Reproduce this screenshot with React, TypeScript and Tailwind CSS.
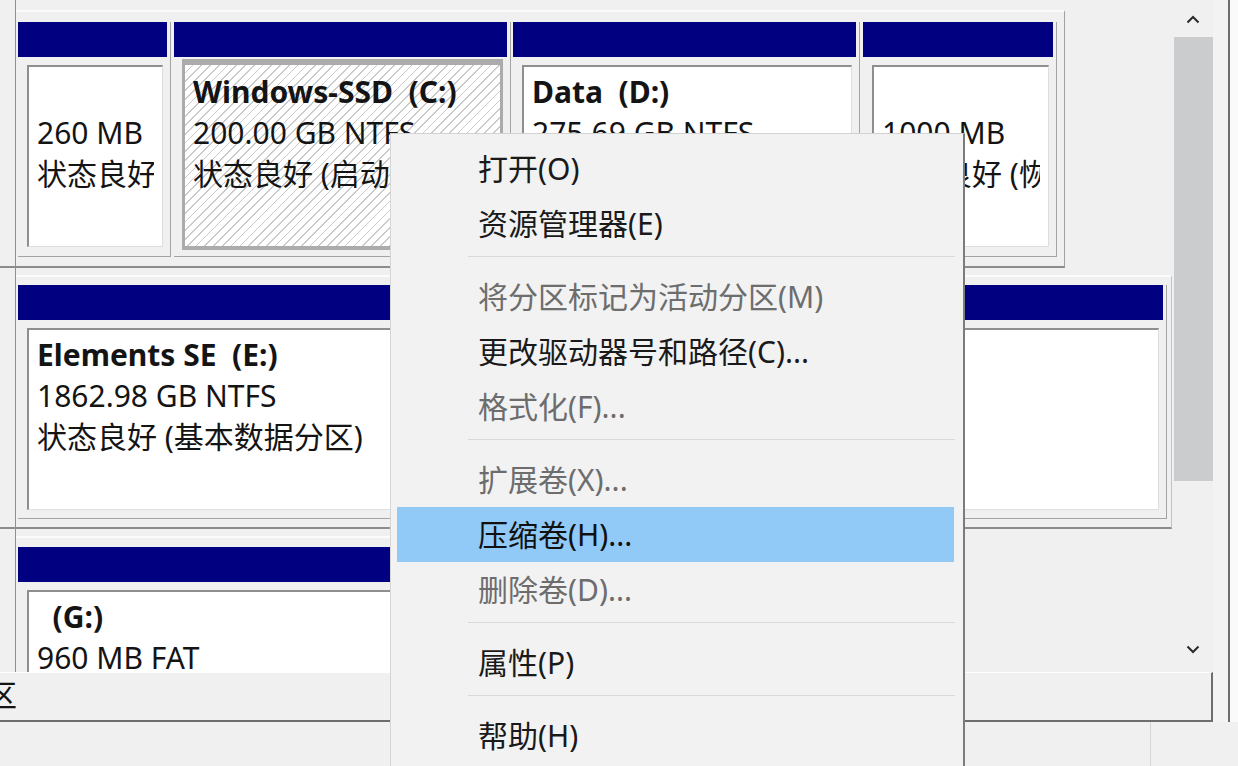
import React from "react";

type Item = { t: string; d?: boolean; h?: boolean } | "sep";

const menuItems: Item[] = [
  { t: "打开(O)" },
  { t: "资源管理器(E)" },
  "sep",
  { t: "将分区标记为活动分区(M)", d: true },
  { t: "更改驱动器号和路径(C)..." },
  { t: "格式化(F)...", d: true },
  "sep",
  { t: "扩展卷(X)...", d: true },
  { t: "压缩卷(H)...", h: true },
  { t: "删除卷(D)...", d: true },
  "sep",
  { t: "属性(P)" },
  "sep",
  { t: "帮助(H)" },
];

function Lines({ lines }: { lines: { text: string; bold?: boolean }[] }) {
  return (
    <div className="overflow-hidden whitespace-pre text-[30px] leading-[41px] text-[#141414]">
      {lines.map((l, i) => (
        <div key={i} className={l.bold ? "font-bold" : "font-normal"}>
          {l.text === "" ? "\u00a0" : l.text}
        </div>
      ))}
    </div>
  );
}

function Header() {
  return <div className="h-[35px] shrink-0 bg-[#000080]" />;
}

function WhiteBox({ lines, tall }: { lines: { text: string; bold?: boolean }[]; tall?: boolean }) {
  return (
    <div
      className={
        (tall ? "h-[300px] " : "h-[182px] ") +
        "ml-[9px] mr-[4px] mt-[8px] bg-white border-t-2 border-l-2 border-r border-b border-t-[#8e8e8e] border-l-[#8e8e8e] border-r-[#dedede] border-b-[#dedede] pl-[8px] pr-[8px] pt-[4px]"
      }
    >
      <Lines lines={lines} />
    </div>
  );
}

function ChevronUp() {
  return (
    <svg width="14" height="9" viewBox="0 0 14 9">
      <polyline points="1.5,7.5 7,2 12.5,7.5" fill="none" stroke="#2b2b2b" strokeWidth="2" />
    </svg>
  );
}

function ChevronDown() {
  return (
    <svg width="14" height="9" viewBox="0 0 14 9">
      <polyline points="1.5,1.5 7,7 12.5,1.5" fill="none" stroke="#2b2b2b" strokeWidth="2" />
    </svg>
  );
}

function DiskView() {
  return (
    <div className="w-[1172px] h-[672px] shrink-0 flex overflow-hidden bg-[#f0f0f0]">
      {/* left label column edge */}
      <div className="w-[16px] shrink-0 flex flex-col border-r border-r-[#8f8f8f]">
        <div className="h-[266px] shrink-0" />
        <div className="h-[2px] shrink-0 bg-[#8c8c8c]" />
        <div className="h-[259px] shrink-0" />
        <div className="h-[2px] shrink-0 bg-[#8c8c8c]" />
      </div>

      <div className="flex flex-col items-start pt-[10px]">
        {/* Disk 0 */}
        <div className="flex border-t-2 border-r border-b-2 border-t-[#fbfbfb] border-r-[#a0a0a0] border-b-[#8c8c8c] pl-[2px] pr-[7px] pt-[10px] pb-[9px]">
          <div className="w-[153px] mr-[3px] flex flex-col border-r border-b border-[#a3a3a3] pr-[3px]">
            <Header />
            <div className="mb-[9px]">
              <WhiteBox lines={[{ text: "" }, { text: "260 MB" }, { text: "状态良好 (EFI 系统分区)" }]} />
            </div>
          </div>
          <div className="w-[337px] mr-[2px] flex flex-col border-r border-b border-[#a3a3a3] pr-[3px]">
            <Header />
            <div className="h-[191px] mt-[2px] mb-[6px] ml-[8px] mr-[4px] border-t-[6px] border-x-[3px] border-b-[4px] border-[#ababab] bg-[repeating-linear-gradient(135deg,#ffffff_0px,#ffffff_5px,#cacaca_5px,#cacaca_6.2px)] pl-[8px] pr-[6px] pt-[6px]">
              <Lines
                lines={[
                  { text: "Windows-SSD  (C:)", bold: true },
                  { text: "200.00 GB NTFS" },
                  { text: "状态良好 (启动, 页面文件, 故障转储, 基本数据分区)" },
                ]}
              />
            </div>
          </div>
          <div className="w-[347px] mr-[3px] flex flex-col border-r border-b border-[#a3a3a3] pr-[3px]">
            <Header />
            <div className="mb-[9px]">
              <WhiteBox
                lines={[
                  { text: "Data  (D:)", bold: true },
                  { text: "275.69 GB NTFS" },
                  { text: "状态良好 (基本数据分区)" },
                ]}
              />
            </div>
          </div>
          <div className="w-[194px] flex flex-col border-r border-b border-[#a3a3a3] pr-[3px]">
            <Header />
            <div className="mb-[9px]">
              <WhiteBox lines={[{ text: "" }, { text: "1000 MB" }, { text: "状态良好 (恢复分区)" }]} />
            </div>
          </div>
        </div>

        {/* Disk 1 */}
        <div className="mt-[7px] flex border-t-2 border-r border-b-2 border-t-[#fbfbfb] border-r-[#c4c4c4] border-b-[#8c8c8c] pl-[2px] pr-[4px] pt-[8px] pb-[8px]">
          <div className="w-[1149px] flex flex-col border-r border-b border-[#a3a3a3] pr-[3px]">
            <Header />
            <div className="mb-[8px]">
              <WhiteBox
                lines={[
                  { text: "Elements SE  (E:)", bold: true },
                  { text: "1862.98 GB NTFS" },
                  { text: "状态良好 (基本数据分区)" },
                ]}
              />
            </div>
          </div>
        </div>

        {/* Disk 2 */}
        <div className="mt-[7px] flex border-t-2 border-r border-t-[#fbfbfb] border-r-[#c4c4c4] pl-[2px] pr-[4px] pt-[9px]">
          <div className="w-[560px] flex flex-col border-r border-[#a3a3a3] pr-[3px]">
            <Header />
            <WhiteBox tall lines={[{ text: "  (G:)", bold: true }, { text: "960 MB FAT" }, { text: "状态良好 (主分区)" }]} />
          </div>
        </div>
      </div>
    </div>
  );
}

function Scrollbar() {
  return (
    <div className="w-[41px] h-[672px] shrink-0 flex flex-col bg-[#f0f0f0]">
      <div className="h-[37px] shrink-0 flex items-center justify-center pt-[2px]">
        <ChevronUp />
      </div>
      <div className="h-[444px] shrink-0 ml-[2px] bg-[#cbcccd]" />
      <div className="flex-1" />
      <div className="h-[37px] shrink-0 flex items-center justify-center pb-[9px]">
        <ChevronDown />
      </div>
    </div>
  );
}

function ContextMenu() {
  return (
    <div className="absolute left-[390px] top-[133px] w-[575px] h-[650px] bg-[#f2f2f2] border-t border-l border-t-[#d2d2d2] border-l-[#d6d6d6] border-r-2 border-r-[#7c7c7c] pt-[7px] text-[30px]">
      {menuItems.map((it, i) =>
        it === "sep" ? (
          <div key={i} className="h-[18px] pt-[5px] ml-[77px] mr-[8px]">
            <div className="h-px bg-[#d9d9d9]" />
          </div>
        ) : (
          <div
            key={i}
            className={
              it.h
                ? "h-[55px] ml-[6px] mr-[9px] pl-[81px] leading-[55px] bg-[#91c9f7] text-[#111111]"
                : it.d
                ? "h-[55px] ml-[6px] mr-[9px] pl-[81px] leading-[55px] text-[#6d6d6d]"
                : "h-[55px] ml-[6px] mr-[9px] pl-[81px] leading-[55px] text-[#1a1a1a]"
            }
          >
            {it.t}
          </div>
        )
      )}
    </div>
  );
}

export default function App() {
  return (
    <div className="relative w-[1238px] h-[766px] overflow-hidden bg-[#f0f0f0] font-['Noto_Sans','Noto_Sans_CJK_SC',sans-serif]">
      <div className="flex h-[722px]">
        <div className="w-[1228px] shrink-0 flex flex-col">
          <div className="flex h-[672px]">
            <DiskView />
            <Scrollbar />
            <div className="flex-1 bg-[#f3f3f3]" />
          </div>
          <div className="flex h-[50px]">
            <div className="w-[1213px] shrink-0 overflow-hidden border-t border-b-2 border-r-2 border-t-[#ffffff] border-b-[#6e6e6e] border-r-[#6e6e6e] bg-[#f0f0f0]">
              <div className="ml-[-13px] text-[30px] leading-[44px] text-[#141414] whitespace-nowrap">区</div>
            </div>
            <div className="flex-1 bg-[#f3f3f3]" />
          </div>
        </div>
        <div className="w-[2px] shrink-0 bg-[#6e6e6e]" />
        <div className="flex-1 bg-[#fafafa]" />
      </div>
      <div className="flex h-[44px]">
        <div className="w-[1151px] shrink-0 border-r border-r-[#d6d6d6]" />
        <div className="flex-1" />
      </div>
      <ContextMenu />
    </div>
  );
}
